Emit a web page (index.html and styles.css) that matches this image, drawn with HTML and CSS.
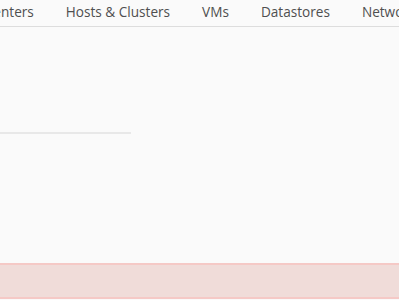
FILE: index.html
```html
<!DOCTYPE html>
<html lang="en">
<head>
    <meta charset="UTF-8">
    <title>Inventory</title>
    <link rel="stylesheet" href="styles.css">
</head>
<body>
    <nav class="tabs">
        <a class="tab">Datacenters</a>
        <a class="tab">Hosts &amp; Clusters</a>
        <a class="tab">VMs</a>
        <a class="tab">Datastores</a>
        <a class="tab">Networks</a>
    </nav>
    <div class="content">
        <div class="divider"></div>
        <div class="alert"></div>
    </div>
</body>
</html>
```

FILE: styles.css
```css
body {
    margin: 0;
    background-color: #fafafa;
    font-family: "Open Sans", Arial, sans-serif;
    overflow: hidden;
}
.tabs {
    display: flex;
    height: 26px;
    border-bottom: 1px solid #dddddd;
    margin-left: -59px;
    white-space: nowrap;
}
.tab {
    padding: 0 16px;
    font-size: 13.6px;
    line-height: 24px;
    color: #4f4f4f;
}
.content {
    padding-top: 105px;
}
.divider {
    width: 131px;
    height: 2px;
    background-color: #e8e8e8;
}
.alert {
    margin-top: 129px;
    height: 32px;
    background-color: #f0dcd9;
    border-top: 2px solid #f5c9c6;
    border-bottom: 2px solid #f5c9c6;
}
```
